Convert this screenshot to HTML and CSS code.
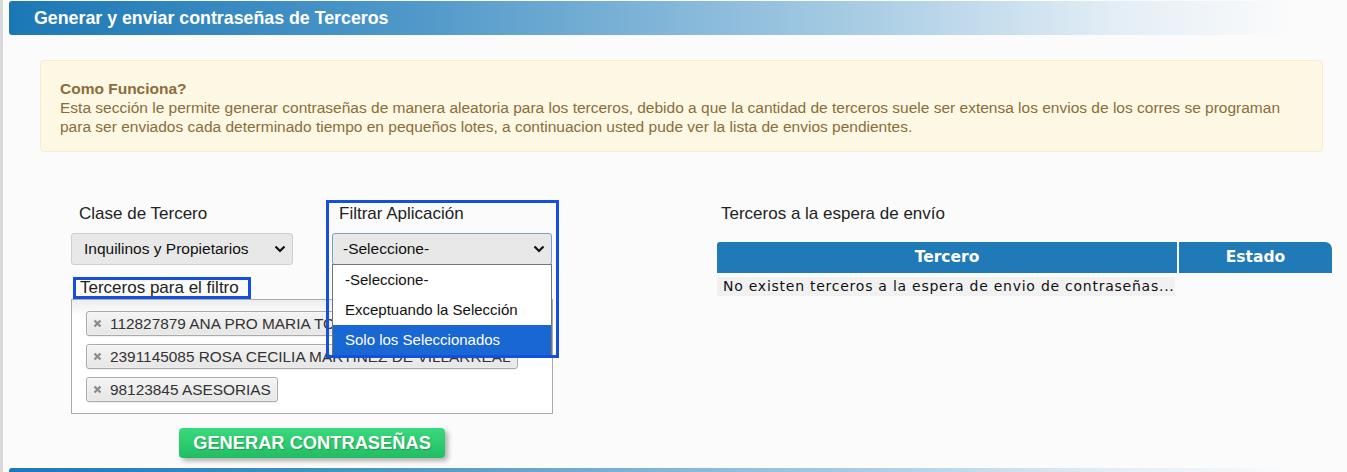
FILE: index.html
```html
<!DOCTYPE html>
<html lang="es">
<head>
    <meta charset="UTF-8">
    <title>Generar y enviar contraseñas de Terceros</title>
    <link rel="stylesheet" href="styles.css">
</head>
<body>
<div class="page">
    <div class="section-title">Generar y enviar contraseñas de Terceros</div>

    <div class="alert">
        <strong>Como Funciona?</strong><br>
        Esta sección le permite generar contraseñas de manera aleatoria para los terceros, debido a que la cantidad de terceros suele ser extensa los envios de los corres se programan para ser enviados cada determinado tiempo en pequeños lotes, a continuacion usted pude ver la lista de envios pendientes.
    </div>

    <div class="form-area">
        <div class="left-panel">
            <div class="select-row">
                <div class="field field-clase">
                    <label class="field-label">Clase de Tercero</label>
                    <div class="select-box">
                        <span>Inquilinos y Propietarios</span>
                        <svg width="12" height="8" viewBox="0 0 12 8"><polyline points="1.5,1.5 6,6 10.5,1.5" fill="none" stroke="#111" stroke-width="2.2"/></svg>
                    </div>
                </div>
                <div class="field field-filtro">
                    <label class="field-label">Filtrar Aplicación</label>
                    <div class="select-box select-open">
                        <span>-Seleccione-</span>
                        <svg width="12" height="8" viewBox="0 0 12 8"><polyline points="1.5,1.5 6,6 10.5,1.5" fill="none" stroke="#111" stroke-width="2.2"/></svg>
                    </div>
                    <ul class="dropdown-list">
                        <li>-Seleccione-</li>
                        <li>Exceptuando la Selección</li>
                        <li class="selected">Solo los Seleccionados</li>
                    </ul>
                </div>
            </div>

            <span class="tags-label">Terceros para el filtro</span>
            <div class="tags-box">
                <span class="tag">
                    <svg width="9" height="9" viewBox="0 0 9 9"><path d="M1.5 1.5 L7.5 7.5 M7.5 1.5 L1.5 7.5" stroke="#8c8c8c" stroke-width="2.4"/></svg>
                    112827879 ANA PRO MARIA TORRES
                </span>
                <span class="tag">
                    <svg width="9" height="9" viewBox="0 0 9 9"><path d="M1.5 1.5 L7.5 7.5 M7.5 1.5 L1.5 7.5" stroke="#8c8c8c" stroke-width="2.4"/></svg>
                    2391145085 ROSA CECILIA MARTINEZ DE VILLARREAL
                </span>
                <span class="tag">
                    <svg width="9" height="9" viewBox="0 0 9 9"><path d="M1.5 1.5 L7.5 7.5 M7.5 1.5 L1.5 7.5" stroke="#8c8c8c" stroke-width="2.4"/></svg>
                    98123845 ASESORIAS
                </span>
            </div>

            <div class="btn-wrap">
                <button class="btn-generar" type="button">GENERAR CONTRASEÑAS</button>
            </div>
        </div>

        <div class="right-panel">
            <div class="field-label right-label">Terceros a la espera de envío</div>
            <div class="queue-head">
                <div class="queue-th th-tercero">Tercero</div>
                <div class="queue-th th-estado">Estado</div>
            </div>
            <div class="queue-row">No existen terceros a la espera de envio de contraseñas...</div>
        </div>
    </div>

    <div class="section-title section-next"></div>
</div>
</body>
</html>
```

FILE: styles.css
```css
* {
    box-sizing: border-box;
}
body {
    margin: 0;
    background: #fbfbfb;
    font-family: "Liberation Sans", Arial, sans-serif;
    color: #222;
    overflow: hidden;
}
.page {
    border-left: 3px solid #d9d9d9;
    min-height: 472px;
    padding-top: 1px;
}

.section-title {
    margin-left: 6px;
    height: 34px;
    line-height: 34px;
    padding-left: 25px;
    color: #fff;
    font-size: 17.8px;
    font-weight: bold;
    border-radius: 3px 0 0 3px;
    background: linear-gradient(to right, #1c78b5 0%, #4f98c9 30%, #a9cde4 64%, #e4eef6 83%, #fbfbfb 96%);
}
.section-next {
    margin-top: 10px;
}

.alert {
    margin: 25px 24px 0 37px;
    padding: 18px 19px 15px;
    border: 1px solid #faebcc;
    border-radius: 4px;
    background: #fcf8e3;
    color: #8a6d3b;
    font-size: 15.5px;
    line-height: 19px;
}

.form-area {
    display: flex;
    margin-top: 48px;
    padding-left: 68px;
}
.left-panel {
    width: 482px;
    flex-shrink: 0;
}
.select-row {
    display: flex;
    align-items: flex-start;
    height: 65px;
}
.field-label {
    display: block;
    font-size: 17px;
    line-height: 22px;
    margin-bottom: 8px;
    padding-left: 8px;
    color: #222;
}
.field-clase {
    width: 222px;
    padding-top: 3px;
    flex-shrink: 0;
}
.field-filtro {
    position: relative;
    z-index: 2;
    flex-shrink: 0;
    width: 233px;
    margin-left: 33px;
    padding: 0 4px 0 3px;
    border: 3px solid #1450dc;
}
.field-filtro .field-label {
    padding-left: 7px;
}

.select-box {
    display: flex;
    align-items: center;
    justify-content: space-between;
    height: 32px;
    padding: 0 6px 0 12px;
    border: 1px solid #cfcfcf;
    border-radius: 3px;
    background: #e8e8e8;
    font-size: 15.5px;
    color: #111;
}
.select-open {
    padding-left: 10px;
    border-color: #7d9cc8;
}

.dropdown-list {
    list-style: none;
    margin: -1px 0 0;
    padding: 0;
    border: 1px solid #767676;
    border-bottom: 0;
    background: #fff;
    font-size: 15px;
    color: #111;
}
.dropdown-list li {
    height: 30px;
    line-height: 30px;
    padding-left: 12px;
}
.dropdown-list li.selected {
    background: #1967d2;
    color: #fff;
}

.tags-label {
    display: inline-block;
    margin: 12px 0 0 2px;
    padding: 0 9px 0 4px;
    border: 3px solid #1450dc;
    font-size: 17px;
    line-height: 16px;
}
.tags-box {
    display: flex;
    flex-direction: column;
    align-items: flex-start;
    gap: 8px;
    padding: 11px 14px 11px;
    border: 1px solid #aaa;
    background: linear-gradient(#eee 1%, #fff 15%);
}
.tag {
    display: inline-flex;
    align-items: center;
    gap: 8px;
    height: 25px;
    padding: 0 6px 0 6px;
    border: 1px solid #aaa;
    border-radius: 3px;
    background: linear-gradient(#f4f4f4, #e6e6e6);
    box-shadow: 0 0 2px #fff inset, 0 1px 0 rgba(0, 0, 0, 0.05);
    font-size: 15.4px;
    color: #333;
    white-space: nowrap;
}

.btn-wrap {
    margin-top: 14px;
    text-align: center;
}
.btn-generar {
    height: 30px;
    padding: 0 14px;
    border: 0;
    border-radius: 4px;
    background: linear-gradient(#3ad97e, #22bd62);
    box-shadow: 3px 3px 5px rgba(0, 0, 0, 0.3);
    color: #fff;
    font-family: "Liberation Sans", Arial, sans-serif;
    font-size: 18.3px;
    font-weight: bold;
    text-shadow: 1px 1px 1px rgba(0, 80, 30, 0.35);
}

.right-panel {
    width: 615px;
    margin-left: 164px;
    padding-top: 3px;
    flex-shrink: 0;
}
.right-label {
    padding-left: 4px;
    margin-bottom: 17px;
}
.queue-head {
    display: grid;
    grid-template-columns: 460px 153px;
    column-gap: 2px;
}
.queue-th {
    height: 31px;
    line-height: 31px;
    text-align: center;
    background: #1f7ab7;
    color: #fff;
    font-family: "DejaVu Sans", Verdana, sans-serif;
    font-size: 15.5px;
    font-weight: bold;
}
.th-tercero {
    border-top-left-radius: 3px;
}
.th-estado {
    border-top-right-radius: 7px;
}
.queue-row {
    width: 458px;
    height: 19px;
    margin-top: 4px;
    padding-left: 6px;
    line-height: 19px;
    background: #f1f1f1;
    color: #111;
    font-family: "DejaVu Sans", Verdana, sans-serif;
    font-size: 14px;
    letter-spacing: 0.75px;
    white-space: nowrap;
}
```
